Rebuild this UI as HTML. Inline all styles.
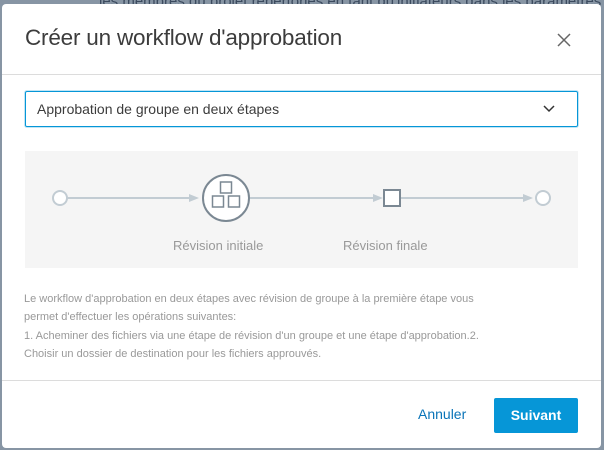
<!DOCTYPE html>
<html><head><style>
*{margin:0;padding:0;box-sizing:border-box}
body{width:604px;height:450px;background:#8795a4;position:relative;overflow:hidden;font-family:"Liberation Sans",sans-serif}
.bgtxt{position:absolute;left:99px;top:-7px;font-size:15px;color:#3b4a5e;white-space:nowrap}
.dlg{position:absolute;left:2px;top:4px;width:599px;height:444px;background:#fff;border-radius:4px}
.t{position:absolute;left:23px;top:21px;font-size:22.5px;color:#3c3c3c;letter-spacing:-0.2px}
.hr{position:absolute;left:0;width:599px;height:1px;background:#dcdcdc}
.sel{position:absolute;left:23px;top:87px;width:553px;height:36px;border:1px solid #0696d7;border-radius:2px;font-size:14px;color:#3c3c3c;padding:9px 0 0 11px;box-shadow:0 0 0 1px rgba(6,150,215,.25)}
.dia{position:absolute;left:23px;top:147px;width:553px;height:117px;background:#f5f5f5}
.lbl{position:absolute;font-size:13px;color:#999}
.desc{position:absolute;left:22px;top:286px;font-size:11px;line-height:18.3px;color:#999;white-space:nowrap}
.ann{position:absolute;left:416px;top:402px;font-size:14px;color:#0a74b8}
.btn{position:absolute;left:492px;top:394px;width:84px;height:35px;background:#0696d7;border-radius:2px;color:#fff;font-size:14px;font-weight:bold;text-align:center;line-height:35px}
</style></head><body>
<div class="bgtxt">les membres du projet répertoriés en tant qu'initiateurs dans les paramètres</div>
<div class="dlg">
<div class="t">Créer un workflow d'approbation</div>
<svg style="position:absolute;left:555px;top:29px" width="14" height="14"><path d="M1 1L13 13M13 1L1 13" stroke="#666" stroke-width="1.5"/></svg>
<div class="hr" style="top:70px"></div>
<div class="sel">Approbation de groupe en deux étapes
<svg style="position:absolute;right:22px;top:13px" width="12" height="8"><path d="M1 1L6 6L11 1" stroke="#333" stroke-width="1.5" fill="none"/></svg></div>
<div class="dia">
<svg width="553" height="117" style="position:absolute;left:0;top:0">
<g stroke="#c2ccd3" stroke-width="2" fill="#c2ccd3">
<line x1="42" y1="47" x2="166" y2="47"/><path d="M164 43L174 47L164 51Z" stroke="none"/>
<line x1="224" y1="47" x2="350" y2="47"/><path d="M348 43L358 47L348 51Z" stroke="none"/>
<line x1="374" y1="47" x2="500" y2="47"/><path d="M498 43L508 47L498 51Z" stroke="none"/>
</g>
<circle cx="35" cy="47" r="7" fill="#fff" stroke="#c2ccd3" stroke-width="2"/>
<circle cx="518" cy="47" r="7" fill="#fff" stroke="#c2ccd3" stroke-width="2"/>
<circle cx="201" cy="47" r="23" fill="#fff" stroke="#7b8893" stroke-width="2"/>
<g fill="#fff" stroke="#7b8893" stroke-width="1.5"><rect x="195.5" y="31" width="11" height="11"/><rect x="187.5" y="45" width="11" height="11"/><rect x="203.5" y="45" width="11" height="11"/></g>
<rect x="359" y="39" width="16" height="16" fill="#fff" stroke="#7b8893" stroke-width="2"/>
</svg>
<div class="lbl" style="left:148px;top:87px">Révision initiale</div>
<div class="lbl" style="left:318px;top:87px">Révision finale</div>
</div>
<div class="desc">Le workflow d'approbation en deux étapes avec révision de groupe à la première étape vous<br>permet d'effectuer les opérations suivantes:<br>1. Acheminer des fichiers via une étape de révision d'un groupe et une étape d'approbation.2.<br>Choisir un dossier de destination pour les fichiers approuvés.</div>
<div class="hr" style="top:376px"></div>
<div class="ann">Annuler</div>
<div class="btn">Suivant</div>
</div>
</body></html>
